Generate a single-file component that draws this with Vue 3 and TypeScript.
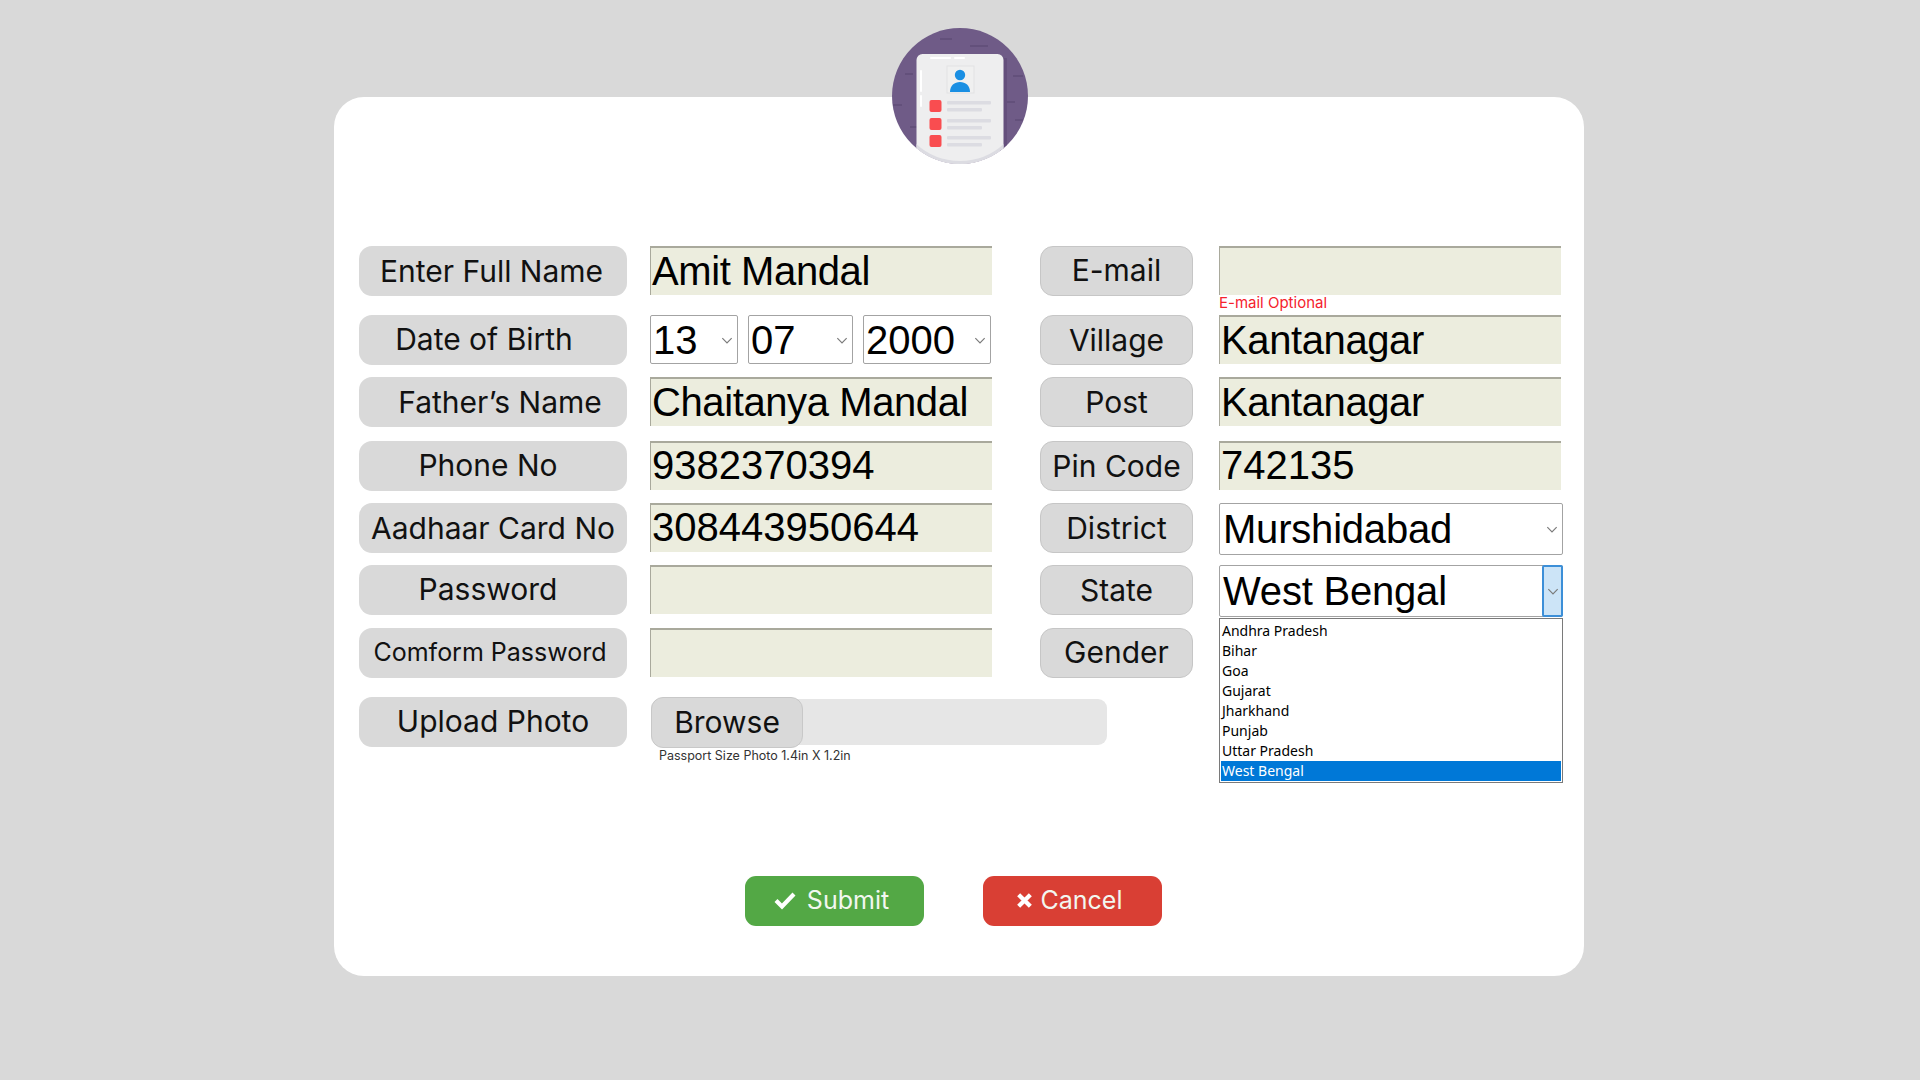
<script setup lang="ts">
const states: string[] = ['Andhra Pradesh', 'Bihar', 'Goa', 'Gujarat', 'Jharkhand', 'Punjab', 'Uttar Pradesh', 'West Bengal']
const marks: number[][] = [[48, 11, 60], [78, 18, 96], [13, 46, 21], [121, 48, 131], [1, 77, 10], [115, 74, 123], [123, 92, 131], [18, 99, 25]]
</script>

<template>
  <main class="page">
    <section class="card">
      <svg class="avatar" viewBox="0 0 136 136" width="136" height="136">
        <defs>
          <clipPath id="disc"><circle cx="68" cy="68" r="68" /></clipPath>
          <clipPath id="sheet"><rect x="24.500" y="26" width="87" height="120" rx="6" /></clipPath>
        </defs>
        <circle cx="68" cy="68" r="68" fill="#6f5b87" />
        <line v-for="m in marks" :key="m[0]" :x1="m[0]" :y1="m[1]" :x2="m[2]" :y2="m[1]" stroke="#5f4d76" stroke-width="1.4" />
        <g clip-path="url(#disc)">
          <rect x="108" y="30" width="7" height="110" fill="#644f7c" />
          <rect x="24.500" y="26" width="87" height="120" rx="6" fill="#eeeeef" />
          <g clip-path="url(#sheet)">
            <circle cx="68" cy="68" r="66.500" fill="none" stroke="#dcdce2" stroke-width="3" />
          </g>
          <rect x="38" y="29" width="21" height="2" rx="1" fill="#fff" />
          <rect x="62" y="29" width="11" height="2" rx="1" fill="#fff" />
          <rect x="28" y="42" width="2" height="22" rx="1" fill="#fff" />
          <rect x="28" y="67" width="2" height="12" rx="1" fill="#fff" />
          <rect x="55" y="38" width="27" height="27" fill="#f0f0f0" stroke="#e2e2e4" stroke-width="1" />
          <circle cx="68" cy="47" r="5.200" fill="#1a8fe3" />
          <path d="M58 64c0-6.500 4.500-10 10-10s10 3.500 10 10z" fill="#1a8fe3" />
          <g fill="#f94d50">
            <rect x="37.500" y="72" width="12" height="12" rx="2" />
            <rect x="37.500" y="90" width="12" height="12" rx="2" />
            <rect x="37.500" y="107" width="12" height="12" rx="2" />
          </g>
          <g fill="#dcdce2">
            <rect x="55" y="73" width="44" height="3.500" rx="1" />
            <rect x="55" y="80" width="35" height="3.500" rx="1" />
            <rect x="55" y="91" width="44" height="3.500" rx="1" />
            <rect x="55" y="98" width="35" height="3.500" rx="1" />
            <rect x="55" y="108" width="44" height="3.500" rx="1" />
            <rect x="55" y="115" width="35" height="3.500" rx="1" />
          </g>
        </g>
      </svg>

      <form class="grid" @submit.prevent>
        <div class="label shift-name">Enter Full Name</div>
        <div class="input name">Amit Mandal</div>
        <div class="label right up">E-mail</div>
        <div class="email-cell">
          <div class="input"></div>
          <span class="note">E-mail Optional</span>
        </div>

        <div class="label shift-date up">Date of Birth</div>
        <div class="dob">
          <div class="select day"><span>13</span><svg class="chev" viewBox="0 0 10 6"><path d="M1 1l4 4 4-4" /></svg></div>
          <div class="select month"><span>07</span><svg class="chev" viewBox="0 0 10 6"><path d="M1 1l4 4 4-4" /></svg></div>
          <div class="select year"><span>2000</span><svg class="chev" viewBox="0 0 10 6"><path d="M1 1l4 4 4-4" /></svg></div>
        </div>
        <div class="label right">Village</div>
        <div class="input name">Kantanagar</div>

        <div class="label shift-father">Father’s Name</div>
        <div class="input name">Chaitanya Mandal</div>
        <div class="label right">Post</div>
        <div class="input name">Kantanagar</div>

        <div class="label shift-phone up">Phone No</div>
        <div class="input digits">9382370394</div>
        <div class="label right">Pin Code</div>
        <div class="input digits">742135</div>

        <div class="label">Aadhaar Card No</div>
        <div class="input digits">308443950644</div>
        <div class="label right">District</div>
        <div class="select wide"><span>Murshidabad</span><svg class="chev" viewBox="0 0 10 6"><path d="M1 1l4 4 4-4" /></svg></div>

        <div class="label shift-phone up">Password</div>
        <div class="input"></div>
        <div class="label right">State</div>
        <div class="select wide open">
          <span>West Bengal</span>
          <i class="arrow"><svg class="chev" viewBox="0 0 10 6"><path d="M1 1l4 4 4-4" /></svg></i>
          <ul class="menu">
            <li v-for="s in states" :key="s" :class="{ active: s === 'West Bengal' }">{{ s }}</li>
          </ul>
        </div>

        <div class="label small up">Comform Password</div>
        <div class="input"></div>
        <div class="label right up">Gender</div>
        <div></div>

        <div class="label up">Upload Photo</div>
        <div class="file-cell">
          <div class="file"><div class="browse">Browse</div></div>
          <span class="hint">Passport Size Photo 1.4in X 1.2in</span>
        </div>
      </form>

      <div class="actions">
        <button class="btn ok" type="button">
          <svg viewBox="0 0 24 20" width="24" height="20"><path d="M3 10.500l6 6L21 4" fill="none" stroke="#fff" stroke-width="4.200" /></svg>
          Submit
        </button>
        <button class="btn no" type="button">
          <svg viewBox="0 0 16 16" width="17" height="17"><path d="M2.500 2.500l11 11m0-11l-11 11" fill="none" stroke="#fff" stroke-width="4" /></svg>
          Cancel
        </button>
      </div>
    </section>
  </main>
</template>

<style>
html, body { margin: 0; background: #d9d9d9; }
</style>

<style scoped>
.page {
  min-height: 1080px;
  padding-top: 97px;
  box-sizing: border-box;
  font-family: Inter, "Liberation Sans", sans-serif;
  color: #111;
}
.card {
  position: relative;
  box-sizing: border-box;
  width: 1250px;
  height: 879px;
  margin-left: 334px;
  padding: 149px 24px 0 25px;
  background: #fff;
  border-radius: 30px;
}
.avatar {
  position: absolute;
  top: -69px;
  left: 558px;
}
.grid {
  display: grid;
  grid-template-columns: 268px 342px 181px 344px;
  column-gap: 23px;
  grid-template-rows: 69px 62px 64px 62px 62px 63px 69px 50px;
  align-items: start;
}
.grid > .right { margin-left: 25px; width: 153px; }
.label {
  box-sizing: border-box;
  height: 50px;
  display: flex;
  align-items: center;
  justify-content: center;
  padding-bottom: 1px;
  background: #d9d9d9;
  border-radius: 13px;
  font-size: 30px;
  white-space: nowrap;
}
.grid > .up { padding-bottom: 3px; }
.right { border: 1px solid #c6c6c6; }
.small { font-size: 25px; padding-right: 6px; }
.shift-name { padding-right: 3px; }
.shift-date { padding-right: 18px; }
.shift-father { padding-left: 14px; }
.shift-phone { padding-right: 10px; }
.input {
  box-sizing: border-box;
  width: 342px;
  height: 49px;
  background: #ecedde;
  border-top: 2px solid #a9a99c;
  border-left: 1px solid #a9a99c;
  padding-left: 1px;
  font: 40px/47px "Liberation Sans", Arial, sans-serif;
  color: #000;
  white-space: nowrap;
  overflow: hidden;
}
.name { letter-spacing: -0.4px; }
.digits { line-height: 45px; }
.email-cell { display: flex; flex-direction: column; }
.note {
  margin-top: -1px;
  font-size: 15px;
  line-height: 17px;
  color: #f5222d;
}
.dob { display: flex; gap: 10px; }
.select {
  box-sizing: border-box;
  position: relative;
  height: 49px;
  display: flex;
  align-items: center;
  padding-left: 2px;
  background: #fff;
  border: 1px solid #a3a3a3;
  border-radius: 2px;
  font: 40px/1 "Liberation Sans", Arial, sans-serif;
  color: #000;
}
.day { width: 88px; }
.month { width: 105px; }
.year { width: 128px; }
.wide { width: 344px; height: 52px; padding-left: 3px; letter-spacing: -0.2px; }
.chev {
  position: absolute;
  right: 4px;
  top: 50%;
  width: 12px;
  height: 7px;
  margin-top: -3px;
  fill: none;
  stroke: #7a7a7a;
  stroke-width: 1;
}
.arrow {
  position: absolute;
  top: -1px;
  right: -1px;
  bottom: -1px;
  width: 21px;
  box-sizing: border-box;
  background: #cce4f7;
  border: 2px solid #3c8fd8;
  border-radius: 2px;
}
.arrow .chev { right: 2px; }
.menu {
  position: absolute;
  z-index: 1;
  top: 52px;
  left: -1px;
  width: 344px;
  box-sizing: border-box;
  margin: 0;
  padding: 2px 1px 1px;
  list-style: none;
  background: #fff;
  border: 1px solid #7a7a7a;
  font: 14px/20px "Noto Sans", sans-serif;
  letter-spacing: 0;
}
.menu li { padding-left: 1px; height: 20px; }
.menu .active { background: #0078d7; color: #fff; }
.file-cell { grid-column: 2 / 4; display: flex; flex-direction: column; align-items: flex-start; }
.file {
  box-sizing: border-box;
  width: 456px;
  height: 46px;
  margin: 2px 0 0 1px;
  background: #e6e6e6;
  border-radius: 9px;
}
.browse {
  box-sizing: border-box;
  width: 152px;
  height: 51px;
  margin-top: -2px;
  display: flex;
  align-items: center;
  justify-content: center;
  padding-bottom: 2px;
  background: #d9d9d9;
  border: 1px solid #c8c8c8;
  border-radius: 12px;
  font-size: 30px;
}
.hint {
  margin: 2px 0 0 9px;
  font-size: 12.500px;
  line-height: 18px;
  color: #333;
  white-space: nowrap;
}
.actions {
  display: flex;
  justify-content: center;
  gap: 59px;
  margin-top: 129px;
  padding-right: 12px;
}
.btn {
  width: 179px;
  height: 50px;
  display: flex;
  align-items: center;
  justify-content: center;
  gap: 10px;
  padding: 0 7px 3px 0;
  border: 0;
  border-radius: 11px;
  color: #f2f7f0;
  font: 25px Inter, sans-serif;
}
.no { gap: 8px; padding-bottom: 2px; }
.ok { background: #53a845; }
.no { background: #d93f34; }
</style>
